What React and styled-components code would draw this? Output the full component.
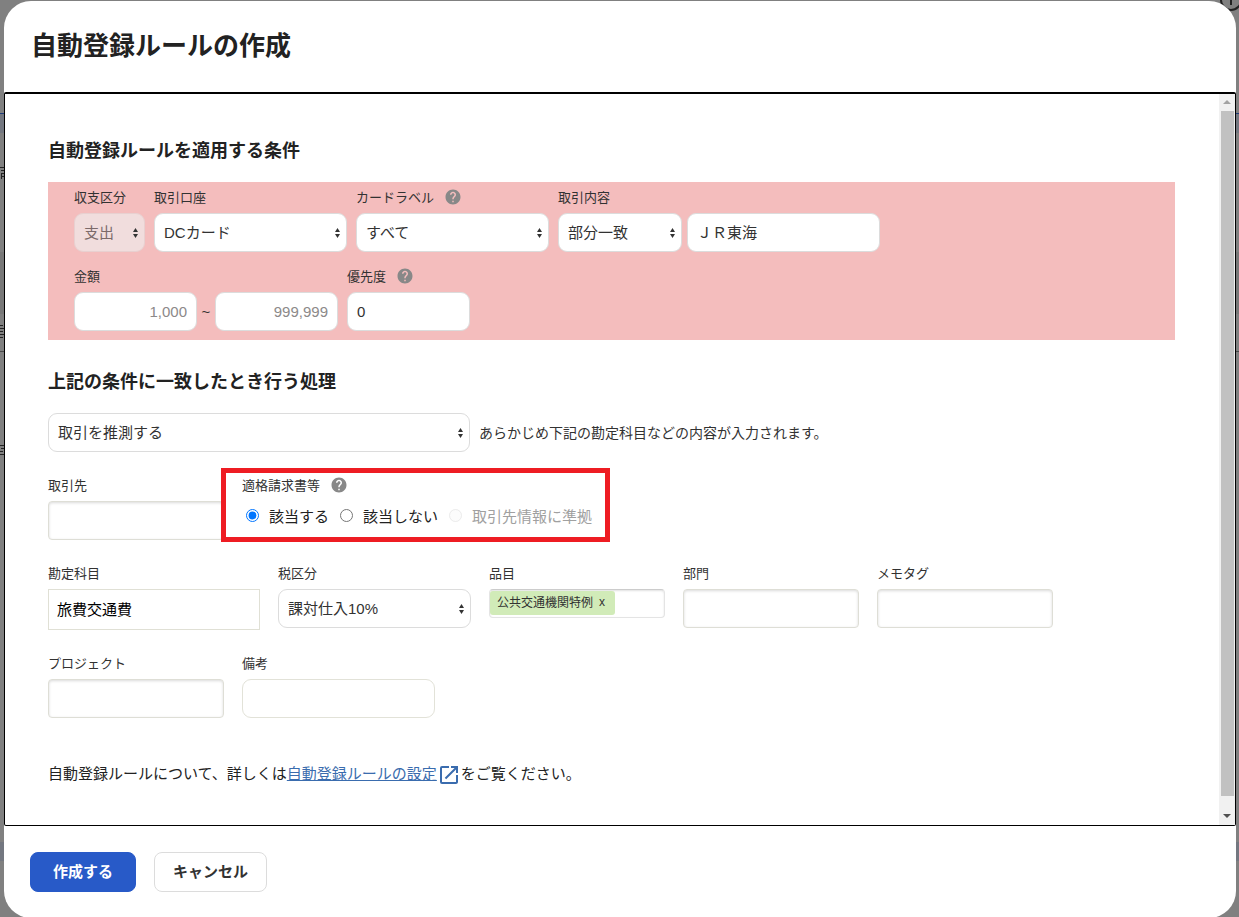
import React from 'react';
import styled, { createGlobalStyle } from 'styled-components';
import { MdHelp, MdOpenInNew } from 'react-icons/md';

const GlobalStyle = createGlobalStyle`
    *{box-sizing:border-box;}
    body{
        margin:0;
        overflow:hidden;
        background-color:#808080;
        color:#323232;
        font-family:"Liberation Sans", "Noto Sans CJK JP", sans-serif;
        font-size:15px;
    }
    input, select, button{font:inherit; color:inherit;}
    h1, h2, p, fieldset{margin:0; padding:0; border:0;}
`;

const Page = styled.div`
    position:relative;
    height:100vh;
    overflow:hidden;
    padding:1px 3px 0 4px;
    background:
        linear-gradient(#1f3c78, #1f3c78) 0 113px / 100% 1px no-repeat,
        linear-gradient(#737780, #737780) 0 114px / 100% 19px no-repeat,
        linear-gradient(#787878, #787878) 0 252px / 100% 62px no-repeat,
        linear-gradient(#4a4a4a, #4a4a4a) 0 351px / 100% 1px no-repeat,
        linear-gradient(#737780, #737780) 0 842px / 100% 19px no-repeat,
        #808080;
`;

const BehindIcon = styled.svg`
    position:absolute;
    top:-12px;
    right:-4px;
`;

const BehindMarks = styled.svg`
    position:absolute;
    top:166px;
    left:0;
`;

const Modal = styled.main`
    position:relative;
    background-color:#fff;
    border-radius:27px;
    overflow:hidden;
`;

const Header = styled.header`
    padding:32px 27px 33px;
`;

const Title = styled.h1`
    color:#222;
    font-size:26px;
    line-height:26px;
`;

const Body = styled.div`
    display:flex;
    border:1px solid #000;
    border-top-width:2px;
    border-radius:2px;
`;

const Content = styled.form`
    flex:1;
    padding:46px 44px 38px 43px;
`;

const SectionTitle = styled.h2`
    margin-bottom:20px;
    color:#222;
    font-size:18px;
    line-height:22px;
`;

const Conditions = styled.section`
    display:flex;
    flex-direction:column;
    gap:14px;
    margin-bottom:31px;
    padding:5px 26px 9px;
    background-color:#f4bdbd;
`;

const Actions = styled.section`
    display:flex;
    flex-direction:column;
    gap:23px;
`;

const Row = styled.div`
    display:flex;
    flex-wrap:wrap;
    align-items:${props => props.$center ? 'center' : 'stretch'};
    gap:${props => props.$gap || 9}px;
`;

const FieldBox = styled.div`
    width:${props => props.$width ? `${props.$width}px` : 'auto'};
`;

const LabelLine = styled.div`
    display:flex;
    align-items:center;
    gap:10px;
    height:20px;
    margin-bottom:6px;
    font-size:13px;
    white-space:nowrap;
    label, span{padding-bottom:2px;}
    svg{color:#888; font-size:18px;}
`;

const Input = styled.input`
    display:block;
    width:${props => props.$width ? `${props.$width}px` : '100%'};
    height:39px;
    padding:0 9px ${props => props.$raised ? 3 : 0}px;
    border:1px solid ${props => props.$warm ? '#e2e2d8' : '#dcdcdc'};
    border-radius:9px;
    background-color:#fff;
    text-align:${props => props.$right ? 'right' : 'left'};
    &::placeholder{color:#8c8989; opacity:1;}
`;

const ComboInput = styled.input`
    display:block;
    width:100%;
    height:39px;
    padding:0 8px;
    border:1px solid #deded6;
    border-radius:4px;
    background-color:#fff;
    box-shadow:inset 0 1px 3px rgba(0,0,0,0.15);
`;

const AccountInput = styled.input`
    display:block;
    width:100%;
    height:41px;
    padding:0 8px 3px;
    border:1px solid #e0e0d5;
    background-color:#fff;
    &&{color:#000;}
`;

const SelectBox = styled.div`
    position:relative;
    width:${props => props.$width ? `${props.$width}px` : '100%'};
    svg{position:absolute; top:15px; right:7px; pointer-events:none;}
`;

const NativeSelect = styled.select`
    display:block;
    width:100%;
    height:39px;
    padding:0 16px 0 9px;
    border:1px solid #dcdcdc;
    border-radius:9px;
    background-color:#fff;
    appearance:none;
    &:disabled{
        border-color:#e8d0d0;
        background-color:#f1dddd;
        color:#7b6a6a;
        opacity:1;
    }
`;

const Range = styled.div`
    display:flex;
    align-items:center;
    span{width:18px; text-align:center;}
`;

const Pair = styled.div`
    display:flex;
    gap:5px;
`;

const Note = styled.p`
    padding-bottom:2px;
    font-size:14px;
`;

const InvoiceField = styled.fieldset`
    position:relative;
    min-width:0;
    &::after{
        content:'';
        position:absolute;
        inset:-7px -18px -2px -21px;
        border:5px solid #ee1c23;
        pointer-events:none;
    }
`;

const Radios = styled.div`
    display:flex;
    gap:11px;
    margin:10px 0 0 4px;
`;

const Radio = styled.label`
    display:flex;
    align-items:center;
    gap:10px;
    height:20px;
    color:${props => props.$disabled ? '#a0a0a0' : '#222'};
    white-space:nowrap;
    input{width:13px; height:13px; margin:0;}
    input:disabled{opacity:0.4;}
`;

const TagField = styled.div`
    display:flex;
    height:29px;
    padding:1px 0;
    border:1px solid #e4e4e4;
    border-top-color:#ccc;
    border-radius:4px;
    box-shadow:inset 0 1px 2px rgba(0,0,0,0.12);
    >input{flex:1; min-width:0; padding:0; border:0; background:transparent;}
`;

const Tag = styled.span`
    display:flex;
    align-items:center;
    gap:6px;
    height:24px;
    padding:0 10px 3px 7px;
    border-radius:3px;
    background-color:#d1ebb8;
    font-size:12px;
    white-space:nowrap;
    button{padding:0; border:0; background:none;}
`;

const Guide = styled.p`
    margin-top:44px;
    color:#222;
    line-height:24px;
    svg{font-size:24px; color:#3a6cae; vertical-align:middle;}
`;

const GuideLink = styled.a`
    color:#3a6cae;
`;

const ScrollBar = styled.div`
    display:flex;
    flex-direction:column;
    width:16px;
    background-color:#f1f1f1;
    svg{display:block;}
`;

const Thumb = styled.div`
    flex:1;
    margin:0 1px 12px 2px;
    background-color:#c1c1c1;
`;

const Footer = styled.footer`
    display:flex;
    gap:18px;
    padding:26px;
`;

const Button = styled.button`
    height:40px;
    padding:0 ${props => props.$primary ? 22 : 18}px 4px;
    border:1px solid ${props => props.$primary ? '#285ac8' : '#dcdcdc'};
    border-radius:8px;
    background-color:${props => props.$primary ? '#285ac8' : '#fff'};
    &&{color:${props => props.$primary ? '#fff' : '#323232'}; font-weight:bold;}
`;

function Field({ label, id, width, help, children }){
    return(
        <FieldBox $width={width}>
            <LabelLine>
                <label htmlFor={id}>{label}</label>
                {help && <MdHelp />}
            </LabelLine>
            {children}
        </FieldBox>
    );
}

function Select({ id, value, width, disabled, label }){
    return(
        <SelectBox $width={width}>
            <NativeSelect id={id} disabled={disabled} aria-label={label}>
                <option>{value}</option>
            </NativeSelect>
            <svg width="5" height="10" viewBox="0 0 5 10" fill="#333">
                <path d="M2.5 0L5 4H0zM2.5 10L5 6H0z" />
            </svg>
        </SelectBox>
    );
}

function App(){
    return(
        <Page>
            <GlobalStyle />
            <BehindIcon width="24" height="24" viewBox="0 0 24 24" fill="none" stroke="#222" strokeWidth="2">
                <circle cx="12" cy="12" r="10" />
                <path d="M12 11v6" />
            </BehindIcon>
            <BehindMarks width="4" height="290" viewBox="0 0 4 290" stroke="#222" fill="none">
                <path d="M0 1.5h4M1 4.5h3M1 7.5h3M1 10.5h3M1.5 8v5" />
                <path d="M0 159.5h3M0 162.5h4M0 165.5h3M0 168.5h4M0 171.5h3" />
                <path d="M0 279.5h4M1 282.5h3M0 285.5h3M0 288.5h4" />
            </BehindMarks>
            <Modal>
                <Header>
                    <Title>自動登録ルールの作成</Title>
                </Header>
                <Body>
                    <Content>
                        <SectionTitle>自動登録ルールを適用する条件</SectionTitle>
                        <Conditions>
                            <Row>
                                <Field label="収支区分" id="type" width={71}>
                                    <Select id="type" value="支出" disabled />
                                </Field>
                                <Field label="取引口座" id="wallet" width={193}>
                                    <Select id="wallet" value="DCカード" />
                                </Field>
                                <Field label="カードラベル" id="card" width={193} help>
                                    <Select id="card" value="すべて" />
                                </Field>
                                <Field label="取引内容" id="match">
                                    <Pair>
                                        <Select id="match" value="部分一致" width={124} />
                                        <Input $width={193} $raised aria-label="取引内容" defaultValue="ＪＲ東海" />
                                    </Pair>
                                </Field>
                            </Row>
                            <Row>
                                <Field label="金額" id="min">
                                    <Range>
                                        <Input id="min" $width={123} $right placeholder="1,000" />
                                        <span>~</span>
                                        <Input $width={123} $right placeholder="999,999" aria-label="金額" />
                                    </Range>
                                </Field>
                                <Field label="優先度" id="priority" width={123} help>
                                    <Input id="priority" defaultValue="0" />
                                </Field>
                            </Row>
                        </Conditions>

                        <SectionTitle>上記の条件に一致したとき行う処理</SectionTitle>
                        <Actions>
                            <Row $center>
                                <Select value="取引を推測する" width={422} label="上記の条件に一致したとき行う処理" />
                                <Note>あらかじめ下記の勘定科目などの内容が入力されます。</Note>
                            </Row>
                            <Row $gap={18}>
                                <Field label="取引先" id="partner" width={176}>
                                    <ComboInput id="partner" />
                                </Field>
                                <InvoiceField aria-label="適格請求書等">
                                    <LabelLine>
                                        <span>適格請求書等</span>
                                        <MdHelp />
                                    </LabelLine>
                                    <Radios>
                                        <Radio><input type="radio" name="invoice" defaultChecked />該当する</Radio>
                                        <Radio><input type="radio" name="invoice" />該当しない</Radio>
                                        <Radio $disabled><input type="radio" name="invoice" disabled />取引先情報に準拠</Radio>
                                    </Radios>
                                </InvoiceField>
                            </Row>
                            <Row $gap={18}>
                                <Field label="勘定科目" id="account" width={212}>
                                    <AccountInput id="account" defaultValue="旅費交通費" />
                                </Field>
                                <Field label="税区分" id="tax" width={193}>
                                    <Select id="tax" value="課対仕入10%" />
                                </Field>
                                <Field label="品目" id="item" width={176}>
                                    <TagField>
                                        <Tag>公共交通機関特例<button type="button">x</button></Tag>
                                        <input id="item" />
                                    </TagField>
                                </Field>
                                <Field label="部門" id="section" width={176}>
                                    <ComboInput id="section" />
                                </Field>
                                <Field label="メモタグ" id="memo" width={176}>
                                    <ComboInput id="memo" />
                                </Field>
                            </Row>
                            <Row $gap={18}>
                                <Field label="プロジェクト" id="project" width={176}>
                                    <ComboInput id="project" />
                                </Field>
                                <Field label="備考" id="remark" width={193}>
                                    <Input id="remark" $warm />
                                </Field>
                            </Row>
                        </Actions>
                        <Guide>
                            自動登録ルールについて、詳しくは<GuideLink href="#">自動登録ルールの設定</GuideLink><MdOpenInNew />をご覧ください。
                        </Guide>
                    </Content>
                    <ScrollBar>
                        <svg width="16" height="17" viewBox="0 0 16 17" fill="#a3a3a3"><path d="M8 6l4 4H4z" /></svg>
                        <Thumb />
                        <svg width="16" height="17" viewBox="0 0 16 17" fill="#505050"><path d="M4 6h8l-4 4z" /></svg>
                    </ScrollBar>
                </Body>
                <Footer>
                    <Button $primary>作成する</Button>
                    <Button>キャンセル</Button>
                </Footer>
            </Modal>
        </Page>
    );
}

export default App;
